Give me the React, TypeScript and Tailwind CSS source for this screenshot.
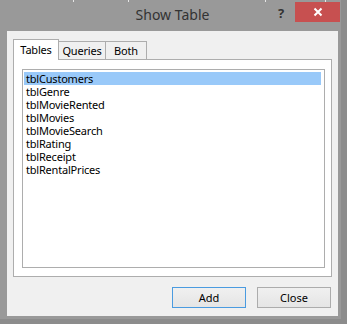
const TABLES = [
  "tblCustomers",
  "tblGenre",
  "tblMovieRented",
  "tblMovies",
  "tblMovieSearch",
  "tblRating",
  "tblReceipt",
  "tblRentalPrices",
];

const font = { fontFamily: '"Noto Sans", "Open Sans", sans-serif' };

export default function App() {
  return (
    <div className="w-[347px] h-[324px] bg-[#8c8c8c] overflow-hidden" style={font}>
      <div className="w-[341px] h-[319px] bg-[#999999] flex flex-col">
        {/* title bar */}
        <div className="relative h-[31px] shrink-0">
          <div className="flex h-[2px] gap-0">
            <span className="ml-[73px] w-px h-[2px] bg-[#e6e6e6]" />
            <span className="ml-[54px] w-px h-[2px] bg-[#e6e6e6]" />
            <span className="ml-[136px] w-px h-[2px] bg-[#e6e6e6]" />
            <span className="ml-[59px] w-px h-[2px] bg-[#e6e6e6]" />
          </div>
          <div className="absolute inset-x-0 top-[4px] pl-[4px] text-center text-[14px] leading-[22px] text-[#333]">
            Show Table
          </div>
          <div className="absolute left-[278px] top-[4px] text-[13px] font-bold leading-[18px] text-[#333]">?</div>
          <div className="absolute left-[295px] top-[2px] w-[45px] h-[20px] bg-[#c75050] flex items-center justify-center">
            <svg width="10" height="10" viewBox="0 0 10 10">
              <path d="M1.5 1.5 L8.5 8.5 M8.5 1.5 L1.5 8.5" stroke="#fff" strokeWidth="2" />
            </svg>
          </div>
        </div>

        {/* client */}
        <div className="ml-[7px] w-[331px] h-[285px] bg-[#f0f0f0] flex flex-col px-[6px] pt-[8px]">
          {/* tabs */}
          <div className="flex items-end h-[20px] text-[11px] tracking-[-0.2px] text-black">
            <div className="relative z-10 w-[46px] h-[21px] -mb-px bg-white border border-b-0 border-[#adadad] flex items-start justify-center pt-[2px] leading-[16px]">
              Tables
            </div>
            <div className="w-[47px] h-[18px] bg-[#f0f0f0] border border-l-0 border-b-0 border-[#adadad] flex items-center justify-center leading-[16px]">
              Queries
            </div>
            <div className="w-[41px] h-[18px] bg-[#f0f0f0] border border-l-0 border-b-0 border-[#adadad] flex items-center justify-center leading-[16px]">
              Both
            </div>
          </div>
          <div className="h-[218px] bg-white border border-[#adadad] pt-[9px] pl-[8px] pr-[6px] pb-[8px]">
            <div className="h-full border border-[#adadad] bg-white pt-[2px] pl-px pr-[3px] text-[11px] tracking-[-0.2px] leading-[13px] text-black">
              {TABLES.map((t, i) => (
                <div
                  key={t}
                  className={`h-[13px] pl-[2px] ${i === 0 ? "bg-[#99c9f9]" : ""}`}
                >
                  {t}
                </div>
              ))}
            </div>
          </div>

          {/* buttons */}
          <div className="flex justify-end gap-[11px] mt-[10px] pr-px text-[11px] text-black">
            <button className="w-[74px] h-[21px] border border-[#4a9be0] bg-gradient-to-b from-[#f0f0f0] to-[#e5e5e5] leading-[16px]">
              Add
            </button>
            <button className="w-[74px] h-[21px] border border-[#acacac] bg-gradient-to-b from-[#f0f0f0] to-[#e5e5e5] leading-[16px]">
              Close
            </button>
          </div>
        </div>
      </div>
    </div>
  );
}
